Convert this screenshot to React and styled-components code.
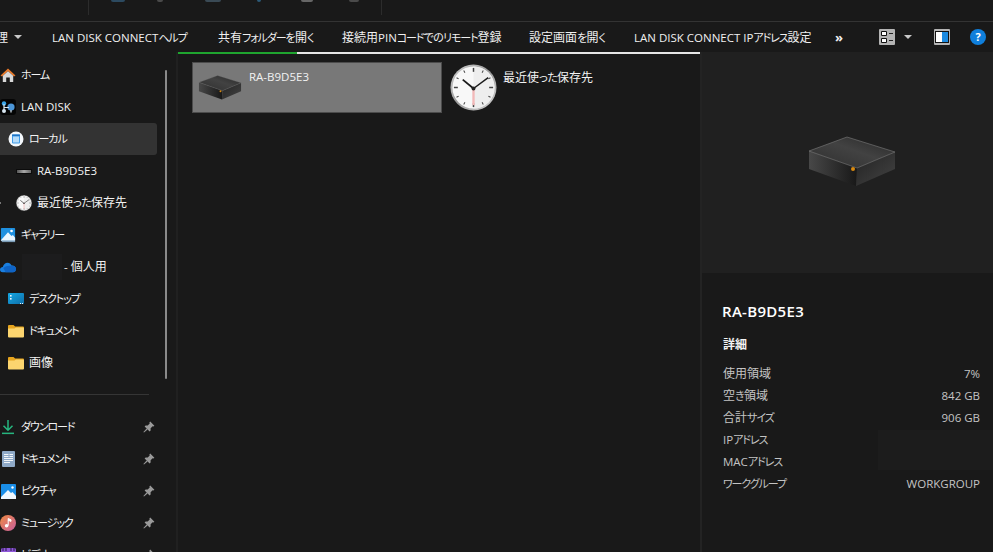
import React from "react";
import styled, { createGlobalStyle } from "styled-components";

const Global = createGlobalStyle`
  html, body { margin: 0; padding: 0; background: #191919; }
  * { box-sizing: border-box; }
`;

const Page = styled.div`
  width: 993px; height: 552px; overflow: hidden; background: #191919; color: #f2f2f2;
  font-family: "Open Sans", "Noto Sans CJK JP", sans-serif; font-size: 12px;
  font-feature-settings: "palt";
  display: flex; flex-direction: column;
`;
const KanaRun = styled.span`
  font-size: 11px; letter-spacing: -1.1px;
`;
const HiraRun = styled.span`
  font-size: 11px; letter-spacing: -0.6px;
`;
const LatinRun = styled.span`
  font-size: 11.5px;
`;
const T = ({ children }) => {
  const parts = children.match(/[\u30A0-\u30FF]+|[\u3040-\u309F]+|[\x20-\x7E]+|[^\u30A0-\u30FF\u3040-\u309F\x20-\x7E]+/g) || [];
  return parts.map((s, i) => {
    if (/^[\u30A0-\u30FF]/.test(s)) return <KanaRun key={i}>{s}</KanaRun>;
    if (/^[\u3040-\u309F]/.test(s)) return <HiraRun key={i}>{s}</HiraRun>;
    if (/^[\x20-\x7E]/.test(s)) return <LatinRun key={i}>{s}</LatinRun>;
    return <span key={i}>{s}</span>;
  });
};
const TopStrip = styled.div`
  height: 21px; flex: none; display: flex; padding-left: 88px;
`;
const StripGroup = styled.div`
  width: 294px; height: 15px; border-left: 1px solid #2c2c2c; border-right: 1px solid #2c2c2c;
  display: flex; align-items: flex-start; padding-left: 4px; gap: 0;
`;
const StripStub = styled.span`
  display: block; height: 2px; width: ${p => p.$w}px; margin-left: ${p => p.$gap}px;
  background: ${p => p.$c}; border-radius: 0 0 2px 2px;
`;
const Toolbar = styled.div`
  height: 31px; flex: none; border-top: 1.5px solid #333; display: flex; align-items: center;
  white-space: nowrap; color: #f0f0f0; font-size: 12px;
`;
const ToolItem = styled.div`
  width: ${p => p.$w}px; flex: none; overflow: visible;
`;
const ClippedGlyph = styled.span`
  margin-left: -4px;
`;
const Overflow = styled(ToolItem)`
  font-size: 13px; font-weight: 700;
`;
const Caret = styled.span`
  width: 0; height: 0; flex: none; border-left: 4px solid transparent; border-right: 4px solid transparent;
  border-top: 4px solid #c8c8c8; display: block;
`;
const ToolIcon = styled.div`
  display: flex; flex: none; margin-left: ${p => p.$ml}px;
`;
const Body = styled.div`
  flex: 1; display: flex; min-height: 0;
`;
const Sidebar = styled.nav`
  width: 178px; flex: none; position: relative; overflow: hidden; padding-top: 7px;
  border-right: 2px solid #202020;
`;
const Scrollbar = styled.div`
  position: absolute; left: 165px; top: 18px; width: 2px; height: 309px; background: #8a8a8a; border-radius: 1px;
`;
const Row = styled.div`
  height: 32px; width: 157px; display: flex; align-items: center; padding-left: ${p => p.$indent}px;
  background: ${p => p.$active ? "#333333" : "transparent"}; border-radius: 0 3px 3px 0;
  white-space: nowrap; position: relative; font-size: 12px;
`;
const RowIcon = styled.span`
  width: 16px; height: 16px; flex: none; display: flex; align-items: center; justify-content: center; margin-right: 5px;
`;
const RowLabel = styled.span`
  margin-bottom: 2px;
`;
const Pin = styled.span`
  position: absolute; left: 143px; top: 10px; display: flex; color: #9a9a9a;
`;
const Chevron = styled.span`
  position: absolute; left: 0; top: 15px; width: 1px; height: 2px; background: #777;
`;
const Masked = styled.span`
  display: inline-block; width: 40px; height: 26px; background: #1c1c1d; margin: 0 2px 0 1px;
`;
const Divider = styled.div`
  height: 1px; width: 149px; background: #353535; margin: 15px 0 16px;
`;
const Main = styled.main`
  width: 522px; flex: none; display: flex; flex-direction: column;
`;
const Progress = styled.div`
  height: 2px; flex: none; background: #e6e6e6; margin-top: 0;
`;
const ProgressFill = styled.div`
  height: 100%; background: #1fa52f;
`;
const Tiles = styled.div`
  display: flex; padding: 8px 0 0 14px; align-items: flex-start;
`;
const Tile = styled.div`
  width: ${p => p.$w}px; height: 51px; flex: none; display: flex; align-items: flex-start;
  background: ${p => p.$selected ? "#787878" : "transparent"};
  border: 1px solid ${p => p.$selected ? "#4c4c4c" : "transparent"};
  margin-right: ${p => p.$mr || 0}px; padding-left: ${p => p.$pl}px;
`;
const TileIcon = styled.div`
  width: ${p => p.$w}px; height: 48px; flex: none; display: flex; align-items: center; justify-content: center;
  margin-right: ${p => p.$mr}px;
`;
const TileLabel = styled.div`
  padding-top: 5px; font-size: 12px; color: #f2f2f2; white-space: nowrap;
`;
const Details = styled.aside`
  flex: 1; border-left: 2px solid #232323; display: flex; flex-direction: column; min-width: 0;
`;
const Preview = styled.div`
  height: 221px; flex: none; background: #202020; display: flex; align-items: center; justify-content: center; padding: 0 0 2px 8px;
`;
const Info = styled.div`
  padding: 28px 13px 0 21px; position: relative; flex: 1;
`;
const Title = styled.div`
  font-size: 15px; font-weight: 600; letter-spacing: .3px; line-height: 20px; color: #fff; margin-left: -1px;
`;
const SectionHead = styled.div`
  font-size: 12px; font-weight: 700; line-height: 16px; margin: 16px 0 10px; color: #f2f2f2;
`;
const InfoRow = styled.div`
  display: flex; justify-content: space-between; height: 22px; line-height: 22px; font-size: 12px; color: #c4c4c4;
`;
const Blur = styled.div`
  position: absolute; left: 176px; top: 157px; right: 0; height: 40px; background: #1c1c1c;
`;

const Home = () => (
  <svg width="16" height="16" viewBox="0 0 16 16">
    <path d="M8 1.5 L15.5 8.6 L14 9.6 L8 4.2 L2 9.6 L.5 8.6Z" fill="#e8792a" />
    <path d="M2.8 8.8 L8 4.3 L13.2 8.8 V15 H9.8 V10.5 H6.2 V15 H2.8Z" fill="#d8d8d8" />
  </svg>
);
const LanDisk = () => (
  <svg width="16" height="16" viewBox="0 0 16 16">
    <rect width="16" height="16" rx="3" fill="#050505" />
    <circle cx="4" cy="4.5" r="2.2" fill="#39a5ea" />
    <circle cx="11" cy="8" r="3.6" fill="#4c96d8" />
    <circle cx="4" cy="12" r="2" fill="#d8e6f0" />
    <path d="M4 5V12M4 8.5H9M11 13.5V11" stroke="#d8e6f0" strokeWidth="1.2" />
  </svg>
);
const Local = () => (
  <svg width="16" height="16" viewBox="0 0 16 16">
    <circle cx="8" cy="8" r="7.5" fill="#f4f8fc" />
    <rect x="4" y="3.5" width="8" height="9" rx="1" fill="#3f9be8" />
    <rect x="5" y="5.5" width="6" height="6" fill="#b6dcfa" />
    <rect x="4" y="3.5" width="8" height="1.4" fill="#1a70c4" />
  </svg>
);
const Slim = () => (
  <svg width="16" height="16" viewBox="0 0 16 16">
    <defs><linearGradient id="slim" x1="0" x2="1" y1="0" y2="0"><stop offset="0" stopColor="#555" /><stop offset=".5" stopColor="#a8a8a8" /><stop offset="1" stopColor="#666" /></linearGradient></defs>
    <rect x="0" y="6" width="16" height="5" fill="#0c0c0c" />
    <rect x="1" y="7" width="14" height="3" fill="url(#slim)" />
  </svg>
);
const Clock = ({ size = 48, id = "c" }) => (
  <svg width={size} height={size} viewBox="0 0 48 48">
    <defs>
      <linearGradient id={id} x1="0" x2="1" y1="0" y2="1"><stop offset="0" stopColor="#d0d0d0" /><stop offset=".5" stopColor="#9a9a9a" /><stop offset="1" stopColor="#d8d8d8" /></linearGradient>
    </defs>
    <circle cx="24" cy="24" r="23.5" fill={`url(#${id})`} />
    <circle cx="24" cy="24" r="21.5" fill="#f8f8f8" />
    <path d="M24 2.5A21.5 21.5 0 0 1 24 45.5Z" fill="#eeeeee" />
    {Array.from({ length: 12 }).map((_, i) => (
      <line key={i} x1="24" y1="4" x2="24" y2={i % 3 === 0 ? 8 : 6.5} stroke="#444" strokeWidth={i % 3 === 0 ? 1.5 : 1} transform={`rotate(${i * 30} 24 24)`} />
    ))}
    <line x1="24" y1="24" x2="24" y2="42" stroke="#f2b8b8" strokeWidth="2.4" />
    <line x1="24" y1="25" x2="13" y2="16" stroke="#1a1a1a" strokeWidth="1.8" />
    <line x1="24" y1="25" x2="39" y2="14" stroke="#1a1a1a" strokeWidth="1.5" />
    <circle cx="24" cy="25" r="2" fill="#222" />
  </svg>
);
const Gallery = () => (
  <svg width="18" height="16" viewBox="0 0 18 16">
    <rect x="1" y="0" width="16" height="14.5" rx="1" fill="#1e90e0" />
    <path d="M1 14 L9 5 L13 9 L14.5 8 L17 11 V14.5 H1Z" fill="#eaf6ff" />
    <circle cx="13" cy="3.5" r="1.5" fill="#fff" />
    <rect x="2" y="14.5" width="15" height="1.5" fill="#7a9ab4" />
  </svg>
);
const Cloud = () => (
  <svg width="17" height="12" viewBox="0 0 17 12">
    <path d="M3 11.5C.8 11.5 0 10 0 8.8 0 7 1.5 6 3 6 3.6 3.4 5.6 1.5 8 1.5c2 0 3.6 1.2 4.3 3 2.6-.4 4.7 1.4 4.7 3.6 0 2-1.4 3.4-3.2 3.4Z" fill="#1a7fe0" />
    <path d="M6 5.5c2-1.2 4.5-1 6.3-.8 2.6-.4 4.7 1.4 4.7 3.6 0 2-1.4 3.2-3.2 3.2H6L3.5 7Z" fill="#0f63c4" />
  </svg>
);
const Desktop = () => (
  <svg width="16" height="14" viewBox="0 0 16 14">
    <defs><linearGradient id="dk" x1="0" x2="1" y1="0" y2="1"><stop offset="0" stopColor="#16a8e4" /><stop offset="1" stopColor="#0e6ea8" /></linearGradient></defs>
    <rect x="0" y="1" width="16" height="11" rx="1" fill="url(#dk)" />
    <rect x="2" y="3" width="1.6" height="1.6" fill="#e8f6ff" />
    <rect x="2" y="6" width="1.6" height="1.6" fill="#e8f6ff" />
    <rect x="12" y="11" width="1" height="1" fill="#e8f6ff" />
    <rect x="14" y="11" width="1" height="1" fill="#e8f6ff" />
  </svg>
);
const Folder = () => (
  <svg width="16" height="14" viewBox="0 0 16 14">
    <path d="M0 2a1 1 0 0 1 1-1h4.5l1.6 1.6H15a1 1 0 0 1 1 1V6H0Z" fill="#e7a51e" />
    <path d="M0 4.6h6.4l1.5-1H15a1 1 0 0 1 1 1V12.5a1 1 0 0 1-1 1H1a1 1 0 0 1-1-1Z" fill="#fcd56f" />
  </svg>
);
const Download = () => (
  <svg width="14" height="16" viewBox="0 0 14 16">
    <path d="M7 1V11M2.5 6.8 7 11.2l4.5-4.4" fill="none" stroke="#26b67f" strokeWidth="1.5" />
    <rect x="1" y="13.6" width="12" height="1.5" fill="#26b67f" />
  </svg>
);
const Doc = () => (
  <svg width="13" height="16" viewBox="0 0 13 16">
    <rect width="13" height="16" rx="1" fill="#8fa9c7" />
    <path d="M2 3.5h4.5M2 5.5h4.5M2 7.5h9M2 9.5h9M2 11.5h6M7.5 3.5h3.5M7.5 5.5h3.5" stroke="#f2f5f8" strokeWidth="1" />
  </svg>
);
const Picture = () => (
  <svg width="15" height="15" viewBox="0 0 15 15">
    <rect width="15" height="15" rx="1" fill="#1a8ee8" />
    <path d="M0 13 L7 6 L10 9 L11.5 8 L15 12 V15 H0Z" fill="#f0f8ff" />
    <circle cx="11.5" cy="3.5" r="1.2" fill="#fff" />
  </svg>
);
const Music = () => (
  <svg width="16" height="16" viewBox="0 0 16 16">
    <defs><linearGradient id="mu" x1="0" x2="1" y1="0" y2="1"><stop offset="0" stopColor="#ee8a42" /><stop offset="1" stopColor="#c85e9e" /></linearGradient></defs>
    <circle cx="8" cy="8" r="8" fill="url(#mu)" />
    <path d="M8.2 3.5V10.5M8.2 3.5 11 4.8V6.4L8.2 5.3" stroke="#fff" strokeWidth="1" fill="#fff" />
    <circle cx="6.6" cy="10.8" r="1.8" fill="#fff" />
  </svg>
);
const Video = () => (
  <svg width="15" height="14" viewBox="0 0 15 14">
    <rect width="15" height="14" rx="1.5" fill="#8f58d8" />
    <path d="M2 0v3M5 0v3M10 0v3M13 0v3" stroke="#3c2466" strokeWidth="1.2" />
  </svg>
);
const PinIcon = () => (
  <svg width="12" height="12" viewBox="0 0 12 12" fill="currentColor">
    <path d="M7.2.6 11.4 4.8 10.4 5.6 9.6 5.3 7.6 7.3 7.6 9.4 6.6 10.4 1.6 5.4 2.6 4.4 4.7 4.4 6.7 2.4 6.4 1.6Z" />
    <path d="M3.6 7.4 4.6 8.4 1 11.6.4 11Z" />
  </svg>
);
const Device = ({ width, height, id }) => (
  <svg width={width} height={height} viewBox="0 0 88 51">
    <defs>
      <linearGradient id={`${id}t`} x1="0" x2="1" y1="1" y2="0"><stop offset="0" stopColor="#2e2e2e" /><stop offset=".55" stopColor="#424242" /><stop offset="1" stopColor="#262626" /></linearGradient>
      <linearGradient id={`${id}l`} x1="0" x2="1" y1="0" y2="0"><stop offset="0" stopColor="#484848" /><stop offset="1" stopColor="#181818" /></linearGradient>
      <linearGradient id={`${id}r`} x1="0" x2="1" y1="0" y2="1"><stop offset="0" stopColor="#222" /><stop offset="1" stopColor="#444" /></linearGradient>
    </defs>
    <path d="M1 15 L39 1 L87 16 L49 32Z" fill={`url(#${id}t)`} />
    <path d="M1 15 L49 32 L48 50 L1 33Z" fill={`url(#${id}l)`} />
    <path d="M49 32 L87 16 L87 33 L48 50Z" fill={`url(#${id}r)`} />
    <path d="M1 15 L39 1 L87 16 M1 15 L49 32 L87 16" fill="none" stroke="#7c7c7c" strokeWidth=".6" />
    <circle cx="45" cy="33" r="2" fill="#d98a10" />
  </svg>
);
const ViewIcon = () => (
  <svg width="16" height="16" viewBox="0 0 16 16">
    <rect width="16" height="16" rx="1" fill="#b4b4b4" />
    <path d="M2.5 2.5h5v4h-5zM2.5 9.5h5v4h-5z" fill="#fff" stroke="#111" strokeWidth="1" />
    <path d="M10 4.5h4M10 11.5h4" stroke="#222" strokeWidth="1.2" />
  </svg>
);
const PaneIcon = () => (
  <svg width="16" height="16" viewBox="0 0 16 16">
    <rect width="16" height="16" rx="1" fill="#b4b4b4" />
    <rect x="1.5" y="2.5" width="13" height="11" fill="#fff" stroke="#111" strokeWidth="1" />
    <rect x="8" y="3" width="6" height="10" fill="#1b8ae0" />
  </svg>
);
const Help = () => (
  <svg width="16" height="16" viewBox="0 0 16 16">
    <circle cx="8" cy="8" r="8" fill="#0f7fdc" />
    <text x="8" y="12" textAnchor="middle" fontSize="11" fontWeight="700" fill="#fff" fontFamily="Open Sans, sans-serif">?</text>
  </svg>
);

const nav = [
  { label: "ホーム", icon: <Home />, indent: 0 },
  { label: "LAN DISK", icon: <LanDisk />, indent: 0 },
  { label: "ローカル", icon: <Local />, indent: 8, active: true },
  { label: "RA-B9D5E3", icon: <Slim />, indent: 16 },
  { label: "最近使った保存先", icon: <Clock size={16} id="cs" />, indent: 16, chevron: true },
  { label: "ギャラリー", icon: <Gallery />, indent: 0 },
  { label: "- 個人用", masked: true, icon: <Cloud />, indent: 0 },
  { label: "デスクトップ", icon: <Desktop />, indent: 8 },
  { label: "ドキュメント", icon: <Folder />, indent: 8 },
  { label: "画像", icon: <Folder />, indent: 8 },
];
const pinned = [
  { label: "ダウンロード", icon: <Download /> },
  { label: "ドキュメント", icon: <Doc /> },
  { label: "ピクチャ", icon: <Picture /> },
  { label: "ミュージック", icon: <Music /> },
  { label: "ビデオ", icon: <Video /> },
];
const info = [
  ["使用領域", "7%"], ["空き領域", "842 GB"], ["合計サイズ", "906 GB"],
  ["IPアドレス", ""], ["MACアドレス", ""], ["ワークグループ", "WORKGROUP"],
];
const stubs = [[18, 14, "#2c4a60"], [32, 6, "#4a4a4a"], [42, 16, "#3a4a55"], [36, 4, "#2c5a78"], [40, 12, "#666"], [36, 10, "#4a4a4a"]];
const tools = [
  ["LAN DISK CONNECTヘルプ", 166], ["共有フォルダーを開く", 124], ["接続用PINコードでのリモート登録", 187],
  ["設定画面を開く", 105], ["LAN DISK CONNECT IPアドレス設定", 201],
];

export default function App() {
  return (
    <Page>
      <Global />
      <TopStrip>
        <StripGroup>
          {stubs.map(([gap, w, c], i) => <StripStub key={i} $gap={gap} $w={w} $c={c} />)}
        </StripGroup>
      </TopStrip>
      <Toolbar>
        <ToolItem $w={14}><ClippedGlyph>理</ClippedGlyph></ToolItem>
        <Caret />
        <ToolItem $w={30} />
        {tools.map(([t, w]) => <ToolItem key={t} $w={w}><T>{t}</T></ToolItem>)}
        <Overflow $w={44}>»</Overflow>
        <ToolIcon $ml={0}><ViewIcon /></ToolIcon>
        <ToolIcon $ml={9}><Caret /></ToolIcon>
        <ToolIcon $ml={22}><PaneIcon /></ToolIcon>
        <ToolIcon $ml={20}><Help /></ToolIcon>
      </Toolbar>
      <Body>
        <Sidebar>
          <Scrollbar />
          {nav.map((n, i) => (
            <Row key={i} $indent={n.indent} $active={n.active}>
              {n.chevron && <Chevron />}
              <RowIcon>{n.icon}</RowIcon>
              {n.masked && <Masked />}
              <RowLabel><T>{n.label}</T></RowLabel>
            </Row>
          ))}
          <Divider />
          {pinned.map((n, i) => (
            <Row key={i} $indent={0}>
              <RowIcon>{n.icon}</RowIcon>
              <RowLabel><T>{n.label}</T></RowLabel>
              <Pin><PinIcon /></Pin>
            </Row>
          ))}
        </Sidebar>
        <Main>
          <Progress><ProgressFill style={{ width: `${(119 / 521) * 100}%` }} /></Progress>
          <Tiles>
            <Tile $selected $w={250} $mr={6} $pl={5}>
              <TileIcon $w={44} $mr={7}><Device width={44} height={25} id="d1" /></TileIcon>
              <TileLabel><T>RA-B9D5E3</T></TileLabel>
            </Tile>
            <Tile $w={150} $pl={0}>
              <TileIcon $w={48} $mr={6}><Clock size={47} id="c1" /></TileIcon>
              <TileLabel><T>最近使った保存先</T></TileLabel>
            </Tile>
          </Tiles>
        </Main>
        <Details>
          <Preview><Device width={88} height={51} id="d2" /></Preview>
          <Info>
            <Title>RA-B9D5E3</Title>
            <SectionHead>詳細</SectionHead>
            {info.map(([k, v]) => <InfoRow key={k}><span><T>{k}</T></span><span><T>{v}</T></span></InfoRow>)}
            <Blur />
          </Info>
        </Details>
      </Body>
    </Page>
  );
}
